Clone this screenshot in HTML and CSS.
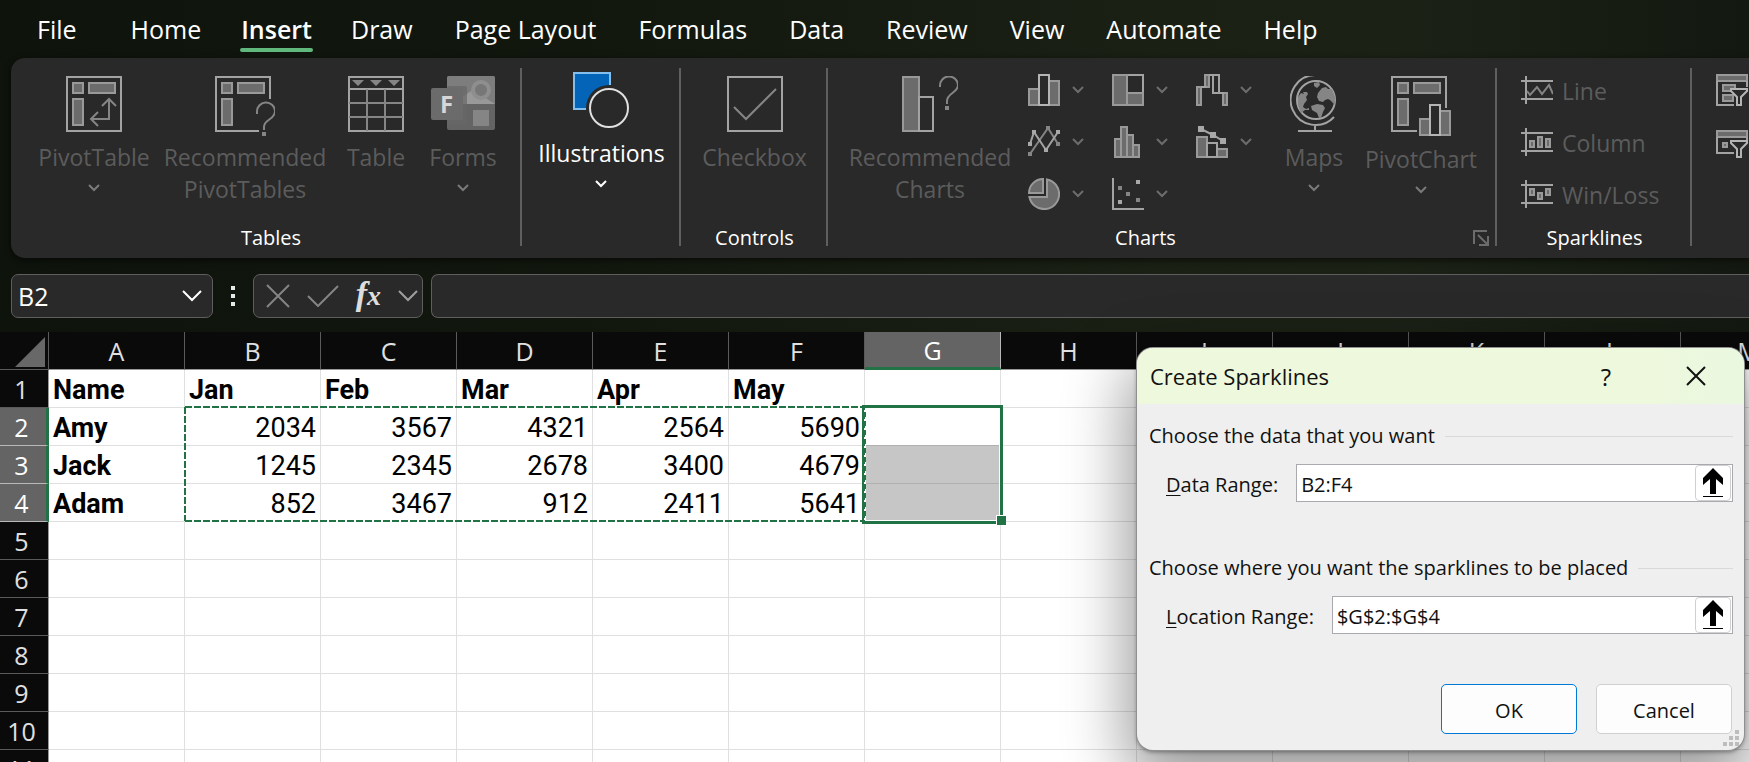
FILE: index.html
```html
<!DOCTYPE html>
<html lang="en">
<head>
<meta charset="utf-8">
<title>Spreadsheet - Create Sparklines</title>
<link rel="stylesheet" href="styles.css">
</head>
<body>
<svg class="defs" aria-hidden="true">
  <symbol id="chevron" viewBox="0 0 12 8"><path d="M1 1l5 5 5-5" class="chev"/></symbol>
  <symbol id="chevron-large" viewBox="0 0 20 12"><path d="M1 1l9 9 9-9" class="chev"/></symbol>
  <symbol id="pivot-cells" viewBox="0 0 60 60"><path class="fill" d="M7 7h10v10H7zM23 7h26v10H23zM7 23h10v26H7z"/></symbol>
  <symbol id="funnel" viewBox="0 0 18 18"><path class="mask" d="M1 1h16v2l-6 6v8H7V9L1 3z"/></symbol>
  <symbol id="pick-arrow" viewBox="0 0 20 30"><path d="M10 0l10 10v7l-7-6v15H7V11l-7 6v-7zM0 28h20v1H0z"/></symbol>
</svg>

<header class="top">
  <nav class="tabs" aria-label="Ribbon tabs">
    <button class="tab tab-file">File</button>
    <button class="tab">Home</button>
    <button class="tab active">Insert</button>
    <button class="tab">Draw</button>
    <button class="tab">Page Layout</button>
    <button class="tab">Formulas</button>
    <button class="tab">Data</button>
    <button class="tab">Review</button>
    <button class="tab">View</button>
    <button class="tab">Automate</button>
    <button class="tab">Help</button>
  </nav>

  <div class="ribbon">
    <section class="group g-tables">
      <div class="items">
        <button class="item w-pivot">
          <svg class="icon" width="56" height="60"><path class="line" d="M1 1h54v54H1z"/><use href="#pivot-cells" width="60" height="60"/><path class="soft" d="M43 24v19H25M36 30l7-7 7 7M32 36l-7 7 7 7"/></svg>
          <span>PivotTable</span><svg class="drop" width="12" height="8"><use href="#chevron"/></svg>
        </button>
        <button class="item w-rec">
          <svg class="icon" width="60" height="60"><path class="line" d="M44 55H1V1h54v22"/><use href="#pivot-cells" width="60" height="60"/><path class="soft" d="M42 38v-2a9 9 0 0 1 18-1c0 9-11 8-11 16v3"/><path class="softfill" d="M47 56h4v4h-4z"/></svg>
          <span>Recommended PivotTables</span>
        </button>
        <button class="item w-table">
          <svg class="icon" width="56" height="60"><path class="line" d="M1 1h54v54H1zM1 13h54"/><path class="soft" d="M1 27h54M1 41h54M19 13v42M37 13v42"/><path class="softfill" d="M4 4h12l-6 6zM22 4h12l-6 6zM40 4h12l-6 6z"/></svg>
          <span>Table</span>
        </button>
        <button class="item w-forms">
          <svg class="icon" width="64" height="60"><rect x="16" width="48" height="54" rx="2" fill="#646464"/><path d="M16 2q0-2 2-2h44q2 0 2 2v26H16z" fill="#7d7d7d"/><path d="M22 28l18-13 10 4 14 9z" fill="#999"/><circle cx="50" cy="14" r="8" fill="#777" stroke="#8e8e8e" stroke-width="4"/><path d="M42 34h16v16H42z" fill="#858585"/><rect x="16" y="10" width="20" height="38" rx="2" fill="#666" opacity=".7"/><rect y="12" width="32" height="32" rx="2" fill="#6b6b6b"/><text x="9" y="37" class="f-letter">F</text></svg>
          <span>Forms</span><svg class="drop" width="12" height="8"><use href="#chevron"/></svg>
        </button>
      </div>
      <h2>Tables</h2>
    </section>

    <section class="group g-illus">
      <div class="items raised">
        <button class="item bright">
          <svg class="icon" width="56" height="60"><path d="M13 37H1V1h36v12A23 23 0 0 0 13 37z" fill="#0364b8"/><path d="M13 37H1V1h36v12" fill="none" stroke="#83beec" stroke-width="2"/><circle cx="36" cy="36" r="19" fill="none" stroke="#e0e0e0" stroke-width="2"/></svg>
          <span>Illustrations</span><svg class="drop" width="12" height="8"><use href="#chevron"/></svg>
        </button>
      </div>
    </section>

    <section class="group g-controls">
      <div class="items">
        <button class="item">
          <svg class="icon" width="56" height="60"><path class="line" d="M1 1h54v54H1z"/><path class="soft" d="M7 31l12 12 30-30"/></svg>
          <span>Checkbox</span>
        </button>
      </div>
      <h2>Controls</h2>
    </section>

    <section class="group g-charts">
      <div class="items">
        <button class="item w-rec">
          <svg class="icon" width="56" height="60"><path class="fill" d="M1 1h16v54H1z"/><path class="line" d="M17 21h14v34H17z"/><path class="soft" d="M38 11v-1a9 9 0 0 1 18-1c0 8-11 8-11 16v3"/><path class="softfill" d="M43 30h4v4h-4z"/></svg>
          <span>Recommended Charts</span>
        </button>
        <div class="minis">
          <button class="mini" aria-label="Column chart"><svg width="32" height="32"><path class="fill" d="M1 15h10v16H1zM21 7h10v24H21z"/><path class="mask" d="M11 1h10v30H11z"/></svg><svg width="12" height="8"><use href="#chevron"/></svg></button>
          <button class="mini" aria-label="Hierarchy chart"><svg width="32" height="32"><path class="line" d="M15 1h16v18H15z"/><path class="fill" d="M1 1h14v30H1zM15 19h16v12H15z"/></svg><svg width="12" height="8"><use href="#chevron"/></svg></button>
          <button class="mini" aria-label="Waterfall chart"><svg width="32" height="32"><path class="fill" d="M1 13h4v18H1zM9 1h4v12H9zM27 19h4v12h-4z"/><path class="line" d="M5 13h5M13 1h5M23 19h5M17 1h6v18h-6z"/></svg><svg width="12" height="8"><use href="#chevron"/></svg></button>
          <button class="mini" aria-label="Line chart"><svg width="32" height="32"><path class="soft" d="M2 28L20 2l10 16"/><path class="line" d="M2 18L6 6l12 18L30 6"/><path class="softfill" d="M0 26h4v4H0zM18 0h4v4h-4zM28 16h4v4h-4z"/><path class="linefill" d="M0 16h4v4H0zM4 4h4v4H4zM16 22h4v4h-4zM28 4h4v4h-4z"/></svg><svg width="12" height="8"><use href="#chevron"/></svg></button>
          <button class="mini" aria-label="Statistic chart"><svg width="32" height="32"><path class="fill" d="M3 13h6v18H3zM15 9h6v22h-6zM21 19h6v12h-6zM9 1h6v30H9z"/></svg><svg width="12" height="8"><use href="#chevron"/></svg></button>
          <button class="mini" aria-label="Combo chart"><svg width="32" height="32"><path class="fill" d="M1 11h10v20H1zM21 23h10v8H21z"/><path class="line" d="M11 17h10v14H11zM5 3l12 6 10 6"/><path class="linefill" d="M2 0h6v6H2zM14 6h6v6h-6zM24 12h6v6h-6z"/></svg><svg width="12" height="8"><use href="#chevron"/></svg></button>
          <button class="mini" aria-label="Pie chart"><svg width="32" height="32"><path class="fill" d="M19 1.4A15 15 0 1 1 1.4 19H19zM15 1v14H1A14 14 0 0 1 15 1z"/></svg><svg width="12" height="8"><use href="#chevron"/></svg></button>
          <button class="mini" aria-label="Scatter chart"><svg width="32" height="32"><path class="line" d="M1 0v31h31"/><path class="softfill" d="M6 8h4v4H6zM14 14h4v4h-4zM24 20h4v4h-4z"/><path class="linefill" d="M24 2h4v4h-4zM6 22h4v4H6z"/></svg><svg width="12" height="8"><use href="#chevron"/></svg></button>
        </div>
        <button class="item w-maps">
          <svg class="icon" width="48" height="60" viewBox="0 2 48 60"><path class="line" d="M26 1A25 25 0 1 0 44 43M25 51v6M8 57h34"/><circle class="line" cx="26" cy="26" r="19"/><path class="softfill" d="M8 23l3-4 3 1-1-2h4l1 2-2 3 1 3-3 4-1 3 3 2 3-1v2h-4l-4 3-3-8zM28 19l4-5 4-1 2 2h4l3 8v8l-5-5-2-1-3 1-2 2-4-1-2-4zM21 32l6-2 6 1 2 3-2 4-2 6h-2l-2-5-5-3zM24 9l5-1 1 3-3 3-3-2z"/></svg>
          <span>Maps</span><svg class="drop" width="12" height="8"><use href="#chevron"/></svg>
        </button>
        <button class="item w-pchart">
          <svg class="icon" width="60" height="62"><path class="line" d="M26 55H1V1h54v31"/><use href="#pivot-cells" width="60" height="60"/><path class="fill" d="M29 43h10v16H29zM49 35h10v24H49z"/><path class="mask" d="M39 29h10v30H39z"/></svg>
          <span>PivotChart</span><svg class="drop" width="12" height="8"><use href="#chevron"/></svg>
        </button>
      </div>
      <h2>Charts</h2>
      <button class="launcher" aria-label="Chart options"><svg width="16" height="16"><path d="M1 14V1h13M5 5l9 9M15 6v9H6" fill="none" stroke="#6c6c6c" stroke-width="2"/></svg></button>
    </section>

    <section class="group g-spark">
      <div class="spark-list">
        <button class="spark"><svg width="32" height="28"><path class="line" d="M0 5h32M0 23h32M5 0v28"/><path class="soft" d="M6 15l3 4 7-8 5 7 7-9 4 9"/></svg><span>Line</span></button>
        <button class="spark"><svg width="32" height="28"><path class="line" d="M0 5h32M0 23h32M5 0v28"/><path class="fill" d="M9 13h4v6H9zM17 9h4v10h-4zM25 11h4v8h-4z"/></svg><span>Column</span></button>
        <button class="spark"><svg width="32" height="28"><path class="line" d="M0 5h32M0 23h32M5 0v28"/><path class="fill" d="M9 9h4v6H9zM17 13h4v6h-4zM25 9h4v6h-4z"/></svg><span>Win/Loss</span></button>
      </div>
      <h2>Sparklines</h2>
    </section>

    <section class="group g-filters">
      <div class="filters">
        <button aria-label="Slicer"><svg width="32" height="32"><path class="fill" d="M1 1h30v6H1zM7 11h12v6H7zM7 21h10v6H7z"/><path class="line" d="M1 7v24h17M31 7v6"/><use href="#funnel" x="14" y="14" width="18" height="18"/></svg></button>
        <button aria-label="Timeline"><svg width="32" height="32"><path class="fill" d="M1 3h30v6H1zM7 15h4v4H7z"/><path class="line" d="M1 9v16h17M31 9v3"/><use href="#funnel" x="14" y="12" width="18" height="18"/></svg></button>
      </div>
    </section>
  </div>

  <div class="formula-row">
    <div class="box name-box">
      <input type="text" value="B2" aria-label="Name box">
      <button aria-label="Show names"><svg width="20" height="12"><use href="#chevron-large"/></svg></button>
    </div>
    <div class="dots"><i></i><i></i><i></i></div>
    <div class="box fx-box">
      <button aria-label="Cancel entry"><svg width="24" height="24"><path class="dim" d="M1 1l22 22M23 1L1 23"/></svg></button>
      <button aria-label="Accept entry"><svg width="32" height="22"><path class="dim" d="M1 11l10 10L31 1"/></svg></button>
      <button class="fx" aria-label="Insert function"><span class="fx-f">f</span><span class="fx-x">x</span></button>
      <button aria-label="Function list"><svg width="20" height="12"><use href="#chevron-large"/></svg></button>
    </div>
    <input class="box formula" type="text" aria-label="Formula bar">
  </div>
</header>

<main class="sheet">
  <table>
    <thead>
      <tr><th class="corner"><svg width="30" height="30"><path d="M30 0v30H0z" fill="#686868"/></svg></th><th>A</th><th>B</th><th>C</th><th>D</th><th>E</th><th>F</th><th class="sel">G</th><th>H</th><th>I</th><th>J</th><th>K</th><th>L</th><th>M</th></tr>
    </thead>
    <tbody>
      <tr><th>1</th><td class="b">Name</td><td class="b">Jan</td><td class="b">Feb</td><td class="b">Mar</td><td class="b">Apr</td><td class="b">May</td><td></td><td></td><td></td><td></td><td></td><td></td><td></td></tr>
      <tr><th class="sel">2</th><td class="b">Amy</td><td>2034</td><td>3567</td><td>4321</td><td>2564</td><td>5690</td><td class="active-cell"></td><td></td><td></td><td></td><td></td><td></td><td></td></tr>
      <tr><th class="sel">3</th><td class="b">Jack</td><td>1245</td><td>2345</td><td>2678</td><td>3400</td><td>4679</td><td class="shade"></td><td></td><td></td><td></td><td></td><td></td><td></td></tr>
      <tr><th class="sel">4</th><td class="b">Adam</td><td>852</td><td>3467</td><td>912</td><td>2411</td><td>5641</td><td class="shade"></td><td></td><td></td><td></td><td></td><td></td><td></td></tr>
      <tr><th>5</th><td></td><td></td><td></td><td></td><td></td><td></td><td></td><td></td><td></td><td></td><td></td><td></td><td></td></tr>
      <tr><th>6</th><td></td><td></td><td></td><td></td><td></td><td></td><td></td><td></td><td></td><td></td><td></td><td></td><td></td></tr>
      <tr><th>7</th><td></td><td></td><td></td><td></td><td></td><td></td><td></td><td></td><td></td><td></td><td></td><td></td><td></td></tr>
      <tr><th>8</th><td></td><td></td><td></td><td></td><td></td><td></td><td></td><td></td><td></td><td></td><td></td><td></td><td></td></tr>
      <tr><th>9</th><td></td><td></td><td></td><td></td><td></td><td></td><td></td><td></td><td></td><td></td><td></td><td></td><td></td></tr>
      <tr><th>10</th><td></td><td></td><td></td><td></td><td></td><td></td><td></td><td></td><td></td><td></td><td></td><td></td><td></td></tr>
      <tr><th>11</th><td></td><td></td><td></td><td></td><td></td><td></td><td></td><td></td><td></td><td></td><td></td><td></td><td></td></tr>
    </tbody>
  </table>
  <div class="selection"><i class="handle"></i></div>
  <svg class="ants" width="682" height="116"><path d="M1 1h680M1 1v114M1 115h680" stroke="#fff"/><path class="dash" d="M1 1h680M1 1v114M1 115h680M681 4v110"/><path d="M681 4v110" stroke="#fff" stroke-dasharray="2 7"/></svg>
</main>

<form class="dialog" role="dialog" aria-labelledby="dialog-title">
  <div class="titlebar">
    <h1 id="dialog-title">Create Sparklines</h1>
    <button type="button" class="help" aria-label="Help">?</button>
    <button type="button" class="close" aria-label="Close"><svg width="20" height="20"><path d="M1 1l18 18M19 1L1 19" fill="none" stroke="#111" stroke-width="2"/></svg></button>
  </div>
  <div class="dialog-body">
    <p class="legend">Choose the data that you want</p>
    <div class="field">
      <label for="data-range"><u>D</u>ata Range:</label>
      <div class="range"><input id="data-range" type="text" value="B2:F4"><button type="button" aria-label="Pick data range"><svg width="20" height="30"><use href="#pick-arrow"/></svg></button></div>
    </div>
    <p class="legend">Choose where you want the sparklines to be placed</p>
    <div class="field">
      <label for="location-range"><u>L</u>ocation Range:</label>
      <div class="range"><input id="location-range" type="text" value="$G$2:$G$4"><button type="button" aria-label="Pick location range"><svg width="20" height="30"><use href="#pick-arrow"/></svg></button></div>
    </div>
    <div class="actions"><button type="button" class="ok">OK</button><button type="button">Cancel</button></div>
  </div>
  <svg class="grip" width="16" height="16"><path d="M12 0h4v4h-4zM12 6h4v4h-4zM6 6h4v4H6zM12 12h4v4h-4zM6 12h4v4H6zM0 12h4v4H0z" fill="#bdbdbd"/></svg>
</form>
</body>
</html>
```
FILE: styles.css
```css
* { box-sizing: border-box; }
html { height: 100%; }
body {
  margin: 0;
  height: 100%;
  display: flex;
  flex-direction: column;
  position: relative;
  overflow: hidden;
  background: #fff;
  font-family: "Open Sans", "Noto Sans", sans-serif;
}
button, input { font: inherit; color: inherit; background: none; border: 0; padding: 0; margin: 0; }
h1, h2, p { margin: 0; font-weight: 400; }
svg { display: block; flex: none; }
.defs { position: absolute; width: 0; height: 0; }

.line, .fill, .soft, .mask { stroke-width: 2; }
.line { fill: none; stroke: #a3a3a3; }
.fill { fill: #6c6c6c; stroke: #999; }
.soft { fill: none; stroke: #858585; }
.mask { fill: #292929; stroke: #b4b4b4; }
.softfill { fill: #858585; }
.linefill { fill: #a8a8a8; }
.chev { fill: none; stroke: currentColor; stroke-width: 2; }
.dim { fill: none; stroke: #858585; stroke-width: 2; }
.f-letter { font: 700 24px "Open Sans", sans-serif; fill: #d6d6d6; }

.top {
  flex: none;
  background: linear-gradient(90deg, #0e130c 0%, #12170e 33%, #1a2014 66%, #1b2115 80%, #131910 100%);
  overflow: hidden;
}
.tabs { display: flex; gap: 42px; height: 58px; padding-left: 37px; }
.tab { position: relative; height: 58px; font-size: 25px; color: #fff; white-space: nowrap; }
.tab-file { margin-right: 12px; }
.tab.active { font-weight: 600; margin: 0 -3px 0 -2px; }
.tab.active::after {
  content: "";
  position: absolute;
  left: -1px;
  right: -1px;
  bottom: 6px;
  height: 4px;
  border-radius: 2px;
  background: #61b87d;
}

.ribbon {
  display: flex;
  height: 200px;
  margin-left: 11px;
  border-radius: 14px 0 0 14px;
  background: #292929;
  box-shadow: 0 2px 6px rgba(0, 0, 0, .6);
}
.group { position: relative; flex: none; display: flex; flex-direction: column; padding: 18px 0 0; }
.group::after { content: ""; position: absolute; right: 0; top: 10px; bottom: 12px; width: 2px; background: #5f5f5f; }
.group h2 { flex: none; padding-bottom: 6px; font-size: 20px; line-height: 28px; text-align: center; color: #fff; }
.g-tables { width: 511px; padding-left: 22px; padding-right: 13px; }
.g-illus { width: 159px; }
.g-controls { width: 147px; }
.g-charts { width: 669px; }
.g-charts h2 { padding-right: 34px; }
.g-charts .items { padding-left: 12px; justify-content: flex-start; }
.g-spark { width: 195px; }
.g-filters { width: 96px; }
.g-filters::after { display: none; }
.items { display: flex; flex: 1; min-height: 0; justify-content: center; align-items: flex-start; }
.items.raised { margin-top: -4px; }
.item { display: flex; flex-direction: column; align-items: center; font-size: 23px; line-height: 32px; color: #5c5c5c; }
.item .icon { margin-bottom: 5px; }
.item .drop { margin-top: 11px; color: #7a7a7a; }
.item.bright, .item.bright .drop { color: #fff; }
.w-pivot { width: 122px; }
.w-rec { width: 180px; }
.w-table { width: 82px; }
.w-forms { width: 92px; }
.w-maps { width: 68px; }
.w-pchart { width: 146px; }
.minis { display: grid; grid-template-columns: repeat(3, 84px); grid-auto-rows: 52px; margin: -2px 0 0 8px; }
.mini { display: flex; align-items: center; gap: 12px; height: 32px; color: #6c6c6c; }
.launcher { position: absolute; right: 8px; bottom: 12px; }
.spark-list { display: flex; flex-direction: column; flex: 1; min-height: 0; gap: 24px; padding-left: 24px; }
.spark { display: flex; align-items: center; gap: 9px; height: 28px; font-size: 23px; line-height: 28px; color: #5c5c5c; }
.spark span { padding-top: 2px; }
.filters { display: flex; flex-direction: column; gap: 22px; padding-left: 24px; margin-top: -2px; }

.formula-row { display: flex; align-items: center; height: 74px; padding: 2px 0 0 11px; color: #fff; }
.box { height: 44px; border: 1px solid #5e5e5e; border-radius: 7px; background: #292929; }
.name-box { display: flex; align-items: center; width: 202px; padding: 0 10px 0 6px; font-size: 25px; }
.name-box input { flex: 1; min-width: 0; }
.dots { display: flex; flex-direction: column; gap: 4px; margin: 0 18px; }
.dots i { width: 4px; height: 4px; background: #e8e8e8; }
.fx-box { display: flex; align-items: center; justify-content: space-between; width: 170px; padding: 0 4px 0 12px; margin-right: 8px; color: #a0a0a0; }
.fx { display: flex; align-items: baseline; height: 40px; font: italic 700 34px/36px "Liberation Serif", serif; color: #ddd; }
.fx-x { font-size: 28px; }
.formula { flex: 1; min-width: 0; border-right: 0; border-radius: 7px 0 0 7px; }

.sheet { position: relative; flex: 1; min-height: 0; overflow: hidden; }
table { table-layout: fixed; width: 1817px; border-spacing: 0; font: 27px/34px Roboto, sans-serif; color: #000; }
th, td { height: 38px; padding: 3px 4px 0; border: solid #e0e0e0; border-width: 0 1px 1px 0; text-align: right; white-space: nowrap; }
th { padding: 2px 0 0; background: #0a0a0a; border-color: #5a5a5a; font: 25px/33px "Open Sans", sans-serif; color: #e0e0e0; text-align: center; }
thead th { border-bottom-color: #999; }
tbody th { border-right-color: #999; padding-right: 5px; }
.corner { width: 49px; border-bottom-color: #5a5a5a; }
.corner svg { margin-left: 15px; }
th.sel { background: #646464; color: #fff; border-color: #b8b8b8; }
thead th.sel { border-bottom: 3px solid #217346; }
tbody th.sel { border-right: 3px solid #217346; padding-right: 3px; }
.b { font-weight: 700; text-align: left; }
.shade { background: #c6c6c6; }
.shade, .active-cell { border-color: #b0b0b0; }
.selection { position: absolute; left: 862px; top: 73px; width: 141px; height: 119px; border: 3px solid #217346; box-shadow: inset 0 0 0 1px #fff; }
.handle { position: absolute; right: -6px; bottom: -4px; width: 10px; height: 10px; background: #217346; border: solid #fff; border-width: 1px 0 0 1px; }
.ants { position: absolute; left: 184px; top: 74px; fill: none; stroke-width: 2; }
.dash { stroke: #217346; stroke-dasharray: 7 2; }

.dialog {
  position: absolute;
  right: 5px;
  top: 348px;
  width: 607px;
  border-radius: 16px;
  overflow: hidden;
  background: #efefef;
  color: #111;
  font-size: 20px;
  box-shadow: 0 0 0 1px #909090, 0 2px 4px rgba(0, 0, 0, .4), 0 24px 64px 8px rgba(0, 0, 0, .42);
}
.titlebar { display: flex; align-items: center; height: 56px; padding: 0 38px 0 13px; background: linear-gradient(90deg, #eef8dc 80%, #eaf8e0); }
.titlebar h1 { flex: 1; font-size: 22px; }
.help { width: 24px; margin-right: 68px; font-size: 24px; }
.dialog-body { padding: 16px 11px 16px 12px; }
.legend { display: flex; align-items: center; gap: 10px; line-height: 32px; white-space: nowrap; }
.legend::after { content: ""; flex: 1; height: 1px; background: #d9d9d9; }
.field { display: flex; align-items: center; gap: 18px; margin: 12px 0 50px; padding-left: 17px; white-space: nowrap; }
.field label { padding-top: 2px; }
.field u { text-underline-offset: 3px; text-decoration-thickness: 1px; }
.range { display: flex; align-items: center; flex: 1; height: 38px; padding: 0 1px 0 4px; border: 1px solid #a9a9ae; background: #fff; }
.range input { flex: 1; min-width: 0; padding-top: 2px; }
.range button { display: flex; align-items: center; justify-content: center; width: 36px; height: 36px; border: 1px solid #d0d0d0; border-radius: 4px; }
.actions { display: flex; justify-content: flex-end; gap: 19px; padding-right: 1px; }
.actions button { width: 136px; height: 50px; padding-top: 2px; border: 1px solid #d0d0d0; border-radius: 5px; background: #fdfdfd; }
.actions .ok { border-color: #0078d4; }
.grip { position: absolute; right: 5px; bottom: 4px; }
```
